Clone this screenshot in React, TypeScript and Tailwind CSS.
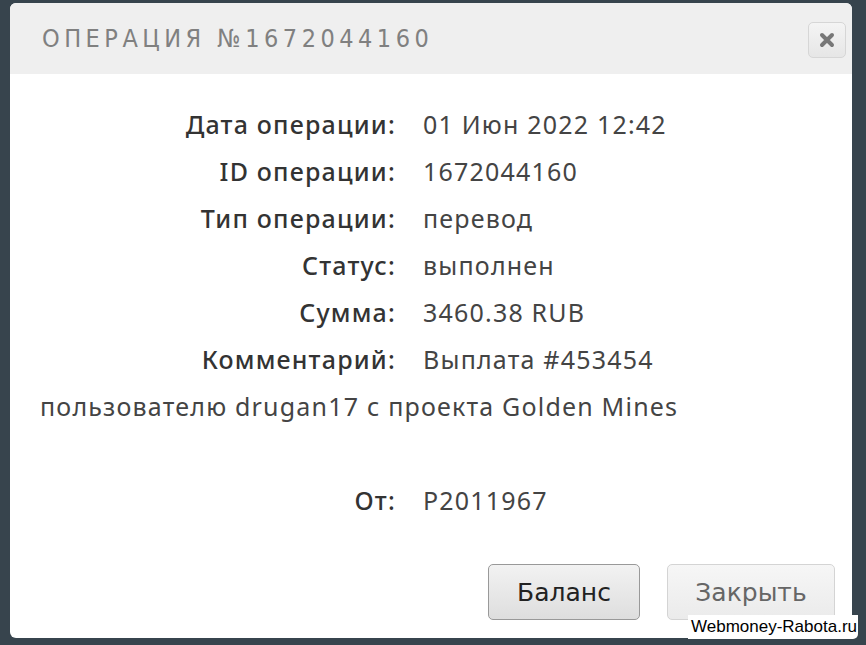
import React from "react";

const rows: [string, string][] = [
  ["Дата операции:", "01 Июн 2022 12:42"],
  ["ID операции:", "1672044160"],
  ["Тип операции:", "перевод"],
  ["Статус:", "выполнен"],
  ["Сумма:", "3460.38 RUB"],
];

export default function App() {
  return (
    <div className="relative h-[645px] w-[866px] overflow-hidden bg-[#37444d] pt-[3px] pl-[10px]">
      {/* Modal */}
      <div className="flex h-[635px] w-[842px] flex-col overflow-hidden rounded-[6px] bg-white">
        {/* Header */}
        <div className="flex h-[71px] items-center justify-between bg-[#efefef] pl-[32px] pr-[6px]">
          <h1 className="font-['DejaVu_Sans_Condensed',sans-serif] text-[25px] tracking-[4.5px] text-[#808080]">
            ОПЕРАЦИЯ №1672044160
          </h1>
          <button className="mt-[3px] flex h-[36px] w-[38px] items-center justify-center rounded-[5px] border border-[#d6d6d6] bg-gradient-to-b from-[#f4f4f4] to-[#e6e6e6]">
            <svg width="16" height="16" viewBox="0 0 16 16">
              <path d="M3 3 L13 13 M13 3 L3 13" stroke="#777" strokeWidth="4" strokeLinecap="round" />
            </svg>
          </button>
        </div>

        {/* Body */}
        <div className="flex-1 pl-[30px] pt-[27px] font-['Noto_Sans',sans-serif] text-[25px] leading-[47px] tracking-[1.2px]">
          {rows.map(([label, value]) => (
            <div key={label}>
              <span className="inline-block w-[356px] text-right font-medium text-[#333]">{label}</span>
              <span className="ml-[27px] text-[#444]">{value}</span>
            </div>
          ))}
          <div>
            <span className="inline-block w-[356px] text-right font-medium text-[#333]">Комментарий:</span>
            <span className="ml-[27px] text-[#444]">
              Выплата #453454
              <br />
              пользователю drugan17 с проекта Golden Mines
            </span>
          </div>
          <div className="mt-[47px]">
            <span className="inline-block w-[356px] text-right font-medium text-[#333]">От:</span>
            <span className="ml-[27px] text-[#444]">P2011967</span>
          </div>

          <div className="mt-[40px] flex justify-end gap-[27px] pr-[17px] font-['DejaVu_Sans',sans-serif] tracking-normal">
            <button className="h-[56px] w-[152px] rounded-[5px] border border-[#999] bg-gradient-to-b from-[#f2f2f2] to-[#dedede] text-[25px] text-[#222]">
              Баланс
            </button>
            <button className="h-[56px] w-[168px] rounded-[5px] border border-[#d4d4d4] bg-gradient-to-b from-[#f6f6f6] to-[#ebebeb] text-[25px] text-[#666]">
              Закрыть
            </button>
          </div>
        </div>
      </div>

      {/* Watermark */}
      <div className="absolute bottom-[6px] right-[8px] rounded-br-[5px] bg-white pl-[3px] pr-[1px] font-['Liberation_Sans',sans-serif] text-[17px] leading-[24px] text-black">
        Webmoney-Rabota.ru
      </div>
    </div>
  );
}
